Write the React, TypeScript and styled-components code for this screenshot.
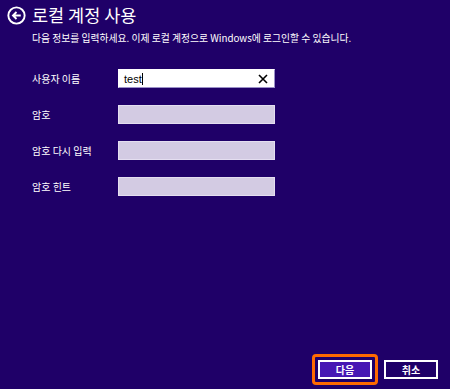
import React from "react";
import styled, { createGlobalStyle } from "styled-components";

const Global = createGlobalStyle`
  html, body { margin: 0; padding: 0; background: #1f0068; }
  body { font-family: "Noto Sans CJK KR", "Noto Sans", sans-serif; color: #fff; }
  * { box-sizing: border-box; }
`;

const Page = styled.div`
  width: 450px;
  height: 389px;
  background: #1f0068;
  display: flex;
  flex-direction: column;
  overflow: hidden;
`;

const Header = styled.div`
  display: flex;
  align-items: center;
  gap: 6px;
  padding: 4px 0 0 7px;
  height: 26px;
`;

const BackIcon = styled.svg`
  width: 19px;
  height: 19px;
  flex: none;
`;

const Title = styled.h1`
  margin: 0;
  font-size: 17.5px;
  font-weight: 400;
  letter-spacing: 0;
  line-height: 22px;
`;

const Subtitle = styled.p`
  margin: 5px 0 0 32px;
  font-size: 9.8px;
  line-height: 14px;
`;

const Form = styled.div`
  display: grid;
  grid-template-columns: 86px 157px;
  row-gap: 17px;
  margin: 24px 0 0 32px;
  align-items: center;
`;

const Label = styled.label`
  font-size: 10px;
  line-height: 19px;
`;

const Field = styled.div<{ $active?: boolean }>`
  height: 19px;
  display: flex;
  align-items: center;
  padding: 0 6px 0 5px;
  background: ${(p) => (p.$active ? "#ffffff" : "#d3cbe3")};
  border: 1px solid ${(p) => (p.$active ? "#ffffff" : "#e4def0")};
  border-bottom-color: ${(p) => (p.$active ? "#9a90c8" : "#e4def0")};
  border-right-color: ${(p) => (p.$active ? "#9a90c8" : "#e4def0")};
  color: #000;
  font-family: "Liberation Sans", Arial, sans-serif;
  font-size: 11px;
`;

const Value = styled.span`
  flex: 1;
  display: flex;
  align-items: center;
`;

const Caret = styled.span`
  display: inline-block;
  width: 1px;
  height: 12px;
  background: #000;
`;

const ClearIcon = styled.svg`
  width: 10px;
  height: 10px;
`;

const Footer = styled.div`
  margin-top: auto;
  display: flex;
  justify-content: flex-end;
  align-items: center;
  gap: 6px;
  padding: 0 12px 4px 0;
`;

const Focus = styled.div`
  padding: 3px;
  border: 3px solid #ff6a00;
  border-radius: 4px;
  display: flex;
`;

const Button = styled.button<{ $primary?: boolean }>`
  width: 54px;
  height: 19px;
  padding: 0;
  border: 2px solid #ffffff;
  background: ${(p) => (p.$primary ? "#4617b4" : "#1f0068")};
  color: #fff;
  font-family: "Noto Sans CJK KR", sans-serif;
  font-size: 10px;
  font-weight: 700;
  line-height: 15px;
`;

export default function App() {
  return (
    <Page>
      <Global />
      <Header>
        <BackIcon viewBox="0 0 20 20">
          <circle cx="10" cy="10" r="8.6" fill="none" stroke="#fff" strokeWidth="2" />
          <path d="M14.5 10H6.5M10 6.3L6.3 10L10 13.7" fill="none" stroke="#fff" strokeWidth="2" />
        </BackIcon>
        <Title>로컬 계정 사용</Title>
      </Header>
      <Subtitle>다음 정보를 입력하세요. 이제 로컬 계정으로 Windows에 로그인할 수 있습니다.</Subtitle>
      <Form>
        <Label>사용자 이름</Label>
        <Field $active>
          <Value>
            test<Caret />
          </Value>
          <ClearIcon viewBox="0 0 10 10">
            <path d="M1 1L9 9M9 1L1 9" stroke="#000" strokeWidth="1.6" />
          </ClearIcon>
        </Field>
        <Label>암호</Label>
        <Field />
        <Label>암호 다시 입력</Label>
        <Field />
        <Label>암호 힌트</Label>
        <Field />
      </Form>
      <Footer>
        <Focus>
          <Button $primary>다음</Button>
        </Focus>
        <Button>취소</Button>
      </Footer>
    </Page>
  );
}
